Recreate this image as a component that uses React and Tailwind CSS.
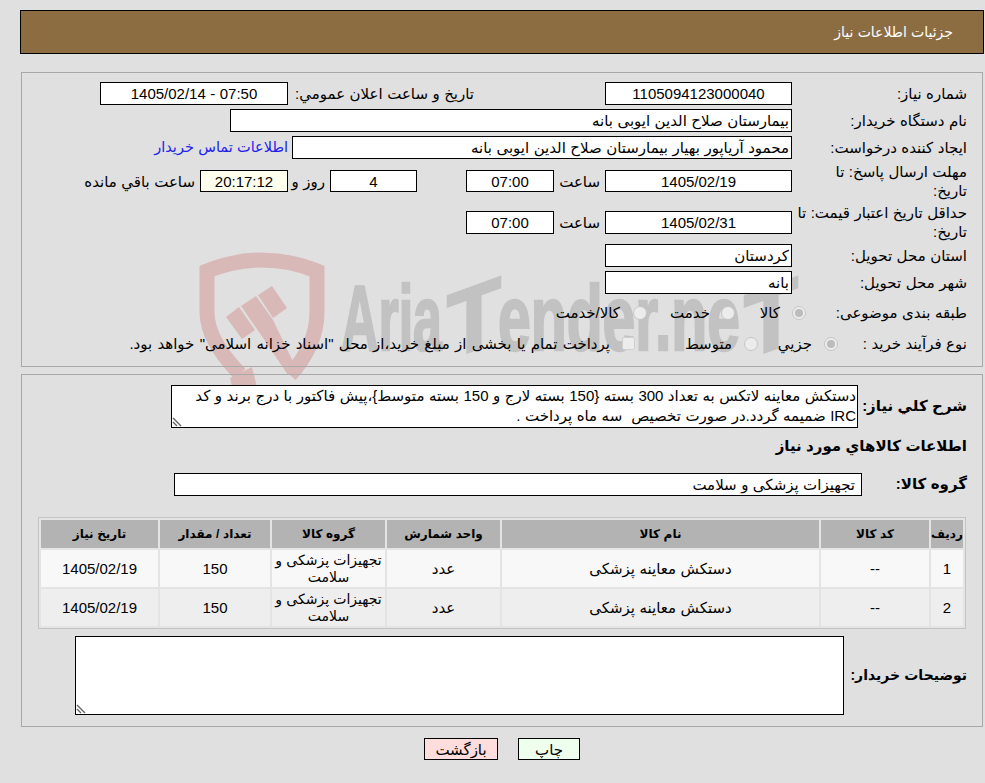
function Box({ className = "", height = "h-[23px]", bg = "bg-white", children }) {
  return (
    <div className={`flex shrink-0 items-center border border-black px-[2px] leading-none text-black ${height} ${bg} ${className}`}>
      {children}
    </div>
  );
}

function Label({ className = "", children }) {
  return <div className={`shrink-0 leading-[19px] ${className}`}>{children}</div>;
}

function Radio({ checked }) {
  return (
    <span className="flex h-[14px] w-[14px] shrink-0 items-center justify-center rounded-full border border-[#c6c6c6] bg-[#ececec]">
      {checked && <span className="h-[8px] w-[8px] rounded-full bg-[#bcbcbc]" />}
    </span>
  );
}

function Grip() {
  return (
    <svg className="absolute bottom-0 left-0" width="10" height="10" viewBox="0 0 10 10">
      <path d="M1 1 L9 9 M1 5 L5 9" stroke="#666" strokeWidth="1.4" fill="none" />
    </svg>
  );
}

function Watermark() {
  const letters = {
    direction: "ltr",
    fontFamily: "'Liberation Sans', sans-serif",
    fontWeight: "700",
    fontSize: "92",
    fill: "#c2c2c2",
    stroke: "#c2c2c2",
    strokeWidth: "2.5",
    lengthAdjust: "spacingAndGlyphs",
  };

  return (
    <svg className="pointer-events-none absolute left-[190px] top-[240px] z-0" width="620" height="150" viewBox="0 0 620 150">
      <path
        d="M50 134 Q17 100 17 72 L17 31 Q72 9 127 31 L127 72 Q127 105 100 135"
        fill="none"
        stroke="#d9b8b8"
        strokeWidth="15"
      />
      <path d="M36 77 L49 67 L65 90 L52 99 Z" fill="#d9b8b8" />
      <path d="M51 66 L66 56 L83 80 L108 132 L98 135 L69 92 Z" fill="#d9b8b8" />
      <path d="M68 55 L82 46 L97 68 L83 78 Z" fill="#d9b8b8" />
      <path d="M40 138 L62 127 L67 147 L42 147 Z" fill="#d9b8b8" />
      <text x="151" y="110" textLength="101" {...letters}>Aria</text>
      <text x="-27" y="0" textLength="54" transform="translate(284 110) skewY(-20)" {...letters}>T</text>
      <text x="308" y="110" textLength="242" {...letters}>ender.ne</text>
      <text x="-27" y="0" textLength="54" transform="translate(581 110) skewY(-20)" {...letters}>T</text>
    </svg>
  );
}

function ItemRow({ n, tone }) {
  const cell = `p-0 text-center ${tone}`;
  return (
    <tr className="h-[37px] leading-[17px]">
      <td className={cell}>{n}</td>
      <td className={cell}>--</td>
      <td className={cell}>دستکش معاینه پزشکی</td>
      <td className={cell}>عدد</td>
      <td className={`${cell} text-[14px]`}>تجهیزات پزشکی و سلامت</td>
      <td className={cell}>150</td>
      <td className={cell}>1405/02/19</td>
    </tr>
  );
}

export default function App() {
  const th = "bg-[#b3b3b3] p-0 text-center text-[12px] font-bold";

  return (
    <div
      dir="rtl"
      className="relative h-[783px] w-[985px] overflow-hidden bg-[#e0e0e0] pt-[10px] font-['Liberation_Sans','DejaVu_Sans',sans-serif] text-[15px] text-black [word-spacing:0.3px]"
    >
      <Watermark />

      <div className="relative z-10 ml-[20px] mr-[1px] flex h-[44px] items-center border border-black bg-[#8c6d42] pr-[30px] text-[14px] text-white">
        جزئیات اطلاعات نیاز
      </div>

      <div className="relative z-10 ml-[21px] mr-[2px] mt-[18px] h-[295px] border border-[#a8a8a8] pr-[15px] pt-[9px]">
        <div className="flex h-[23px] items-center">
          <Label className="w-[175px]">شماره نیاز:</Label>
          <Box className="w-[187px] justify-center">1105094123000040</Box>
          <Label className="mr-[131px] w-[186px] whitespace-nowrap">تاریخ و ساعت اعلان عمومي:</Label>
          <Box className="w-[188px] justify-center">07:50 - 1405/02/14</Box>
        </div>
        <div className="mt-[4px] flex h-[23px] items-center">
          <Label className="w-[175px]">نام دستگاه خریدار:</Label>
          <Box className="w-[562px]">بیمارستان صلاح الدین ایوبی بانه</Box>
        </div>
        <div className="mt-[4px] flex h-[23px] items-center">
          <Label className="w-[175px]">ایجاد کننده درخواست:</Label>
          <Box className="w-[500px]">محمود آریاپور بهیار بیمارستان صلاح الدین ایوبی بانه</Box>
          <span className="mr-[4px] whitespace-nowrap text-[14.5px] text-[#2020ee]">اطلاعات تماس خریدار</span>
        </div>
        <div className="mt-[4px] flex h-[36px] items-center">
          <Label className="w-[175px] pl-[24px]">مهلت ارسال پاسخ: تا تاریخ:</Label>
          <Box height="h-[22px]" className="w-[187px] justify-center">1405/02/19</Box>
          <Label className="w-[51px] pr-[5px]">ساعت</Label>
          <Box height="h-[22px]" className="w-[88px] justify-center">07:00</Box>
          <div className="w-[49px]" />
          <Box height="h-[22px]" className="w-[87px] justify-center">4</Box>
          <Label className="w-[42px] pr-[5px]">روز و</Label>
          <Box height="h-[22px]" bg="bg-[#ffffee]" className="w-[88px] justify-center">20:17:12</Box>
          <Label className="mr-[5px] whitespace-nowrap">ساعت باقي مانده</Label>
        </div>
        <div className="mt-[6px] flex h-[34px] items-center">
          <Label className="w-[175px]">حداقل تاریخ اعتبار قیمت: تا تاریخ:</Label>
          <Box className="w-[187px] justify-center">1405/02/31</Box>
          <Label className="w-[51px] pr-[5px]">ساعت</Label>
          <Box className="w-[88px] justify-center">07:00</Box>
        </div>
        <div className="mt-[5px] flex h-[23px] items-center">
          <Label className="w-[175px]">استان محل تحویل:</Label>
          <Box className="w-[187px]">کردستان</Box>
        </div>
        <div className="mt-[4px] flex h-[23px] items-center">
          <Label className="w-[175px]">شهر محل تحویل:</Label>
          <Box className="w-[187px]">بانه</Box>
        </div>
        <div className="mt-[5px] flex h-[27px] items-center">
          <Label className="w-[161px]">طبقه بندی موضوعی:</Label>
          <Radio checked />
          <Label className="mr-[12px] w-[45px]">کالا</Label>
          <Radio />
          <Label className="mr-[11px] w-[63px]">خدمت</Label>
          <Radio />
          <Label className="mr-[13px]">کالا/خدمت</Label>
        </div>
        <div className="mt-[4px] flex h-[27px] items-center">
          <Label className="w-[129px]">نوع فرآیند خرید :</Label>
          <Radio checked />
          <Label className="mr-[12px] w-[54px]">جزیي</Label>
          <Radio />
          <Label className="mr-[12px] w-[97px]">متوسط</Label>
          <span className="h-[13px] w-[13px] shrink-0 rounded-[2px] border border-[#d0d0d0] bg-[#ececec]" />
          <Label className="mr-[12px] whitespace-nowrap [word-spacing:1.1px]">
            پرداخت تمام یا بخشی از مبلغ خرید،از محل "اسناد خزانه اسلامی" خواهد بود.
          </Label>
        </div>
      </div>

      <div className="relative z-10 ml-[21px] mr-[2px] mt-[7px] h-[353px] border border-[#a8a8a8] pr-[15px] pt-[10px]">
        <div className="flex items-center">
          <div className="w-[109px] shrink-0 whitespace-nowrap font-bold">شرح کلي نیاز:</div>
          <div className="relative h-[43px] w-[687px] border border-black bg-white px-[1px] leading-[20px]">
            دستکش معاینه لاتکس به تعداد 300 بسته {"{"}150 بسته لارج و 150 بسته متوسط{"}"}،پیش فاکتور با درج برند و کد IRC ضمیمه گردد.در صورت تخصیص&nbsp; سه ماه پرداخت .
            <Grip />
          </div>
        </div>
        <div className="mt-[8px] font-bold leading-[19px]">اطلاعات کالاهاي مورد نیاز</div>
        <div className="mt-[18px] flex items-center">
          <div className="w-[105px] shrink-0 font-bold">گروه کالا:</div>
          <Box className="w-[688px] pr-[6px]">تجهیزات پزشکی و سلامت</Box>
        </div>
        <div className="mr-[1px] mt-[21px] w-[928px] border border-[#c4c4c4] bg-[#e4e4e4]">
          <table className="w-full table-fixed border-separate border-spacing-[2px]">
            <colgroup>
              <col className="w-[32px]" />
              <col className="w-[108px]" />
              <col className="w-[317px]" />
              <col className="w-[113px]" />
              <col className="w-[113px]" />
              <col className="w-[110px]" />
              <col className="w-[117px]" />
            </colgroup>
            <thead>
              <tr className="h-[28px]">
                <th className={th}>ردیف</th>
                <th className={th}>کد کالا</th>
                <th className={th}>نام کالا</th>
                <th className={th}>واحد شمارش</th>
                <th className={th}>گروه کالا</th>
                <th className={th}>تعداد / مقدار</th>
                <th className={th}>تاریخ نیاز</th>
              </tr>
            </thead>
            <tbody>
              <ItemRow n="1" tone="bg-[#f8f8f8]" />
              <ItemRow n="2" tone="bg-[#eeeeee]" />
            </tbody>
          </table>
        </div>
        <div className="mt-[7px] flex items-center">
          <div className="w-[123px] shrink-0 whitespace-nowrap text-[14px] font-bold">توضیحات خریدار:</div>
          <div className="relative h-[79px] w-[769px] border border-black bg-white">
            <Grip />
          </div>
        </div>
      </div>

      <div className="relative z-10 ml-[20px] mr-[1px] mt-[11px] flex justify-center gap-[20px]">
        <button className="h-[22px] w-[62px] border border-black bg-[#eeffee]">چاپ</button>
        <button className="h-[22px] w-[74px] border border-black bg-[#ffdddd]">بازگشت</button>
      </div>
    </div>
  );
}
